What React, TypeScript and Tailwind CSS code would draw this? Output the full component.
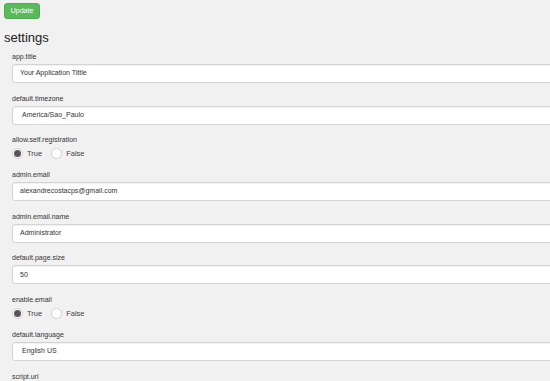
const FIELDS: { key: string; type: "text" | "radio"; value?: string; indent?: boolean; checked?: boolean }[] = [
  { key: "app.title", type: "text", value: "Your Application Tittle" },
  { key: "default.timezone", type: "text", value: "America/Sao_Paulo", indent: true },
  { key: "allow.self.registration", type: "radio", checked: true },
  { key: "admin.email", type: "text", value: "alexandrecostacps@gmail.com" },
  { key: "admin.email.name", type: "text", value: "Administrator" },
  { key: "default.page.size", type: "text", value: "50" },
  { key: "enable.email", type: "radio", checked: true },
  { key: "default.language", type: "text", value: "English US", indent: true },
  { key: "script.url", type: "text", value: "" },
];

function Radio({ label, checked }: { label: string; checked: boolean }) {
  return (
    <label className="flex items-center gap-[4px]">
      <span className="w-[11px] h-[11px] rounded-full border border-[#d0d0d0] bg-white flex items-center justify-center">
        {checked && <span className="w-[7px] h-[7px] rounded-full bg-[#555]" />}
      </span>
      <span className="text-[7.5px] text-[#444]">{label}</span>
    </label>
  );
}

export default function App() {
  return (
    <div className="w-full h-[381px] overflow-hidden bg-[#f1f1f1] font-['Liberation_Sans',Arial,sans-serif]">
      <div className="pl-[4px] pt-[3px]">
        <button className="h-[16px] w-[36px] rounded-[3px] bg-[#5cb85c] border border-[#4cae4c] text-white text-[7px] flex items-center justify-center">
          Update
        </button>
      </div>
      <h1 className="pl-[4px] mt-[11px] text-[13px] leading-[16px] text-[#222]">settings</h1>
      <div className="pl-[12px] mt-[6px]">
        {FIELDS.map((f) => (
          <div key={f.key} className={f.type === "text" ? "mb-[10.6px]" : "mb-[11px]"}>
            <div className="text-[7px] leading-[10px] text-[#333] h-[10px]">{f.key}</div>
            {f.type === "text" ? (
              <div
                className={`mt-[2px] w-[600px] h-[19px] bg-white border border-[#d4d4d4] rounded-[3px] shadow-[inset_0_1px_1px_rgba(0,0,0,0.06)] flex items-center text-[7px] text-[#333] ${f.indent ? "pl-[9px]" : "pl-[7px]"}`}
              >
                {f.value}
              </div>
            ) : (
              <div className="mt-[3px] h-[11px] flex items-center gap-[9px]">
                <Radio label="True" checked={!!f.checked} />
                <Radio label="False" checked={!f.checked} />
              </div>
            )}
          </div>
        ))}
      </div>
    </div>
  );
}
